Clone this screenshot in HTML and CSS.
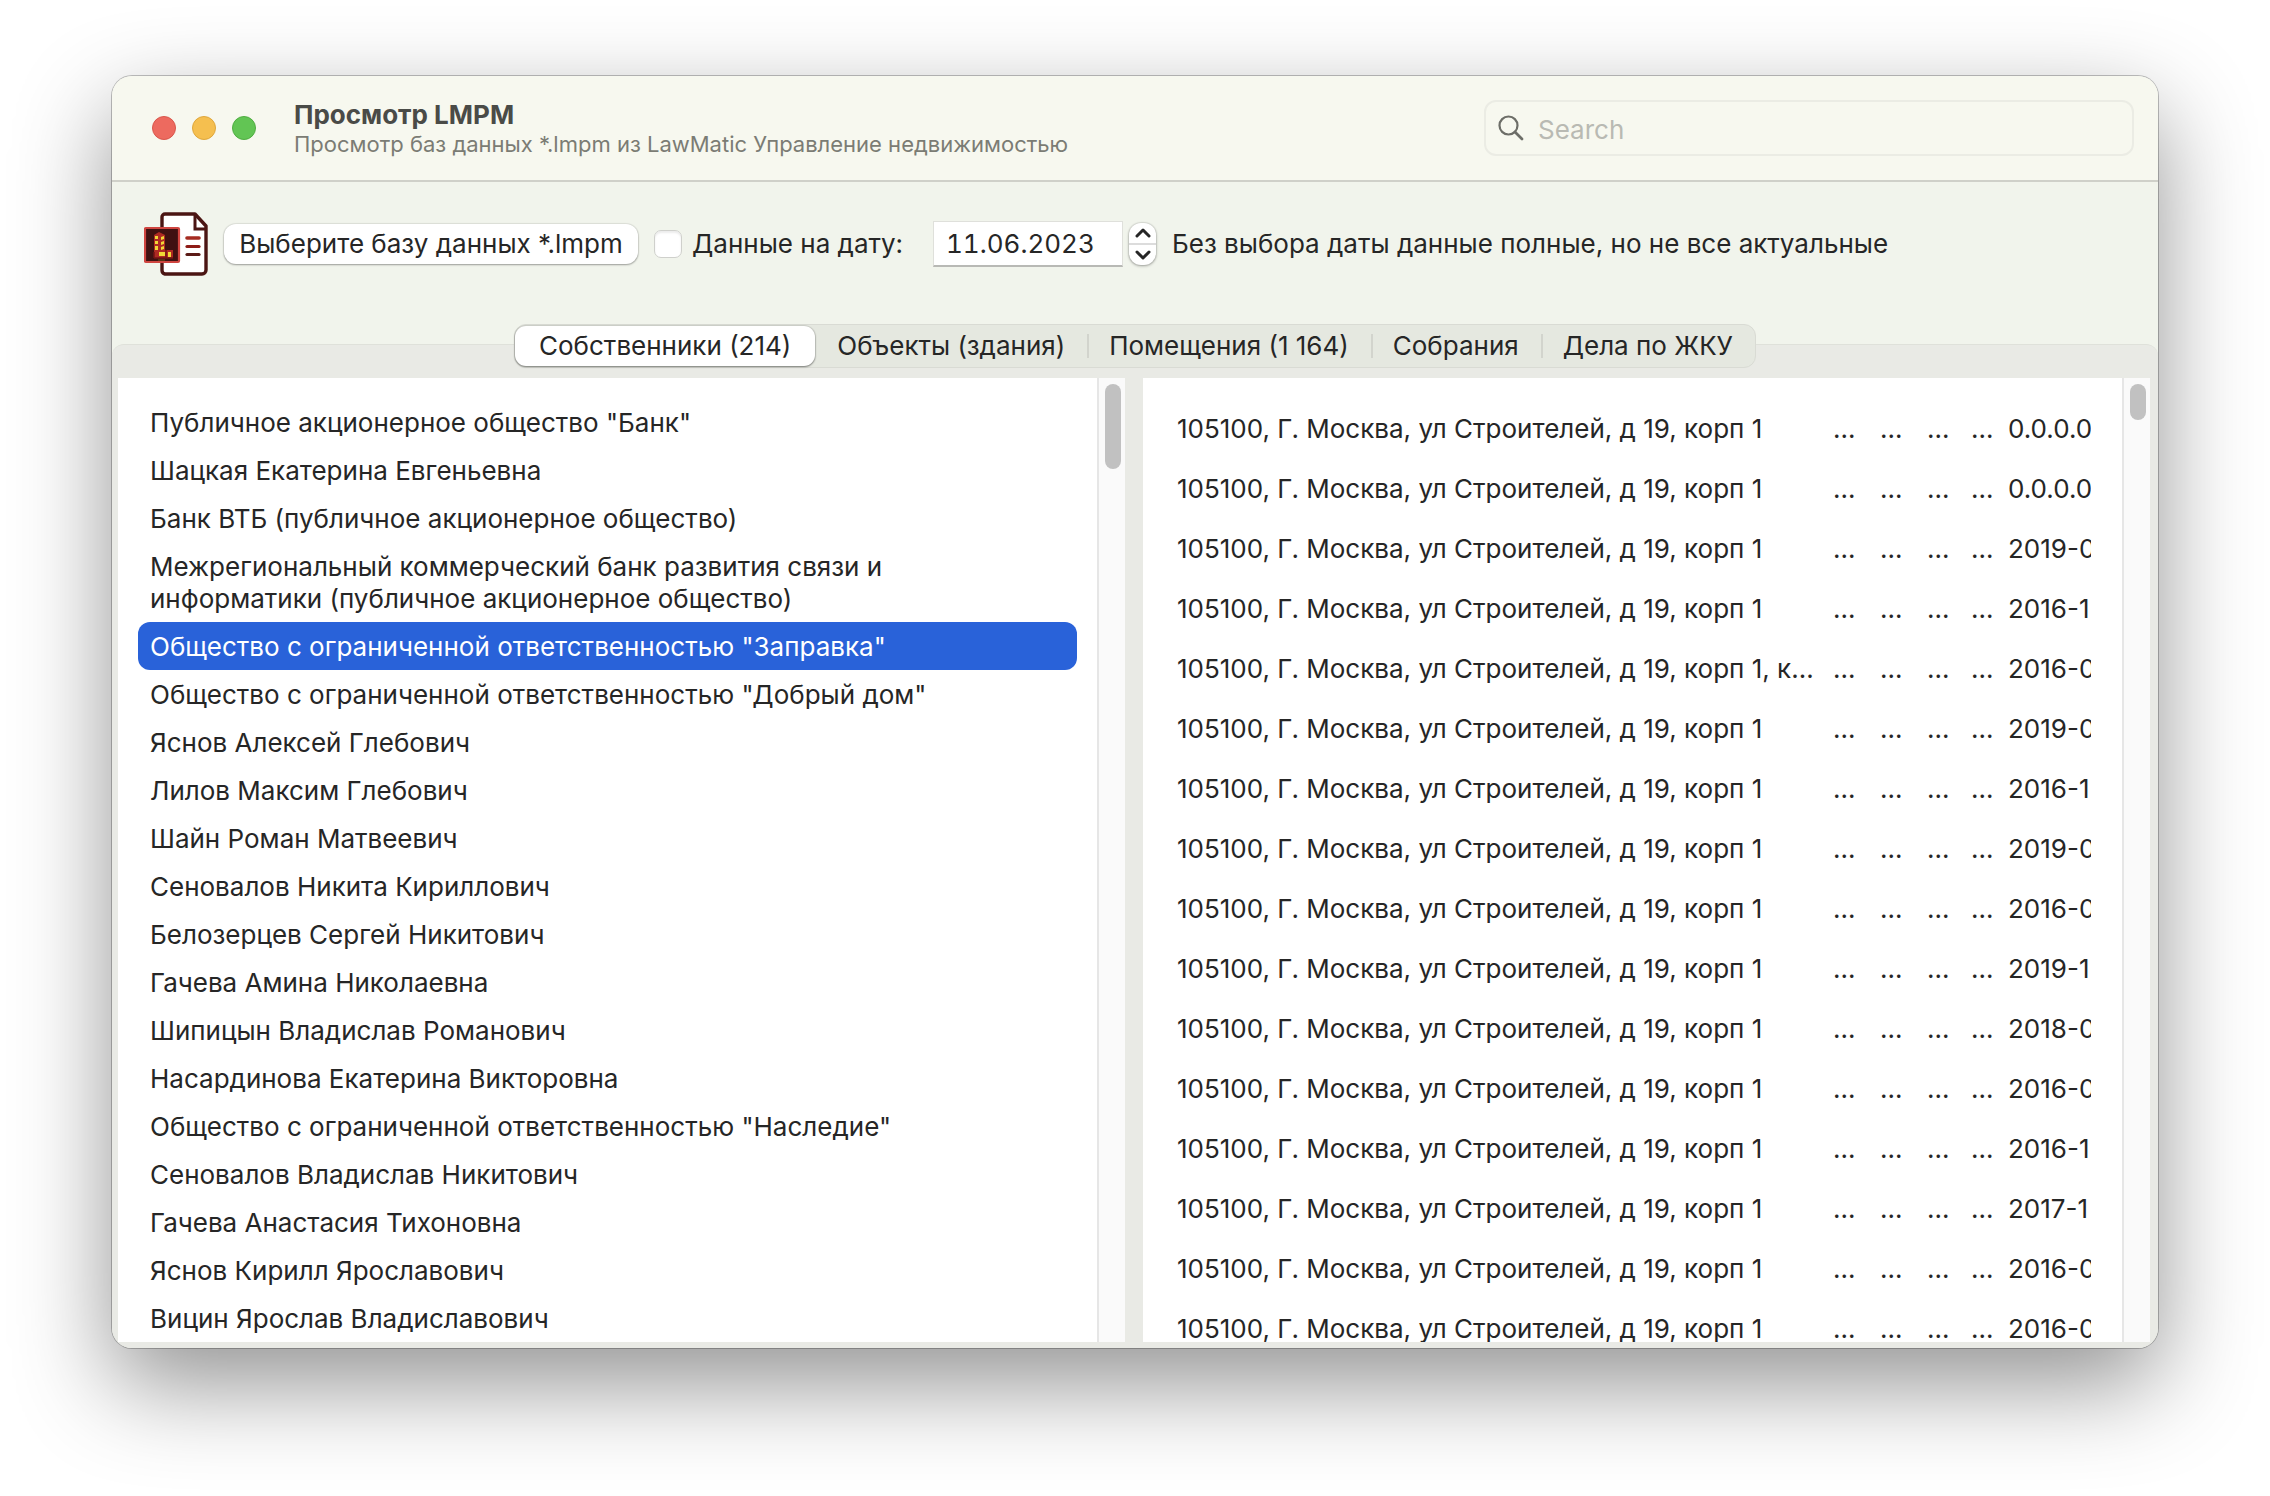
FILE: index.html
```html
<!DOCTYPE html>
<html lang="ru">
<head>
<meta charset="utf-8">
<title>Просмотр LMPM</title>
<link rel="stylesheet" href="styles.css">
</head>
<body>
<main class="window">
  <header class="titlebar">
    <div class="lights">
      <button class="light light-close" aria-label="Закрыть"></button>
      <button class="light light-min" aria-label="Свернуть"></button>
      <button class="light light-max" aria-label="Развернуть"></button>
    </div>
    <div class="titles">
      <h1 class="title">Просмотр LMPM</h1>
      <p class="subtitle">Просмотр баз данных *.lmpm из LawMatic Управление недвижимостью</p>
    </div>
    <label class="search">
      <svg class="search-icon" viewBox="0 0 26 26" aria-hidden="true"><circle cx="10.5" cy="10.5" r="9" fill="none" stroke="currentColor" stroke-width="2.2"/><path d="M17 17l7 7" stroke="currentColor" stroke-width="2.8" stroke-linecap="round"/></svg>
      <input class="search-input" type="text" placeholder="Search" aria-label="Search">
    </label>
  </header>

  <div class="toolbar">
    <svg class="file-icon" viewBox="0 0 64 64" aria-hidden="true">
      <path d="M21 2h30l11 12v44a4 4 0 0 1-4 4H21a4 4 0 0 1-3-4V5a3 3 0 0 1 3-3z" fill="#fff" stroke="#4b1513" stroke-width="3.4" stroke-linejoin="round"/>
      <path d="M51 2v15h11" fill="none" stroke="#4b1513" stroke-width="3"/>
      <path d="M43 26h12" stroke="#a52b20" stroke-width="3.6" stroke-linecap="round"/>
      <path d="M43 34.500h12" stroke="#8e1c17" stroke-width="3.200" stroke-linecap="round"/>
      <path d="M43 42.500h12" stroke="#5b1b17" stroke-width="3.200" stroke-linecap="round"/>
      <rect x="1" y="16" width="34" height="34" rx="1" fill="#3f1111" stroke="#cf4540" stroke-width="2.200"/>
      <path d="M10 23l5-3 6 3v15h8v8H10z" fill="#ae2a23"/>
      <path d="M11 24h3v3h-3zM11 29h3v3h-3zM11 34h3v4h-3zM17 25l3-1v3l-3 1zM17 30l3-1v3l-3 1zM17 35l3-1v3l-3 1zM15 40h6v4h-6zM24 40h3v5h-3z" fill="#f0d836"/>
      <path d="M10 40v6M22 38v8M10 46h19" stroke="#741514" stroke-width="1.500"/>
      <path d="M14 48h7" stroke="#725210"/>
    </svg>
    <button class="open-button">Выберите базу данных *.lmpm</button>
    <label class="date-check"><input class="checkbox" type="checkbox">Данные на дату:</label>
    <input class="date-input" type="text" value="11.06.2023" aria-label="Дата">
    <div class="stepper">
      <button class="step" aria-label="Больше"><svg class="chevron" viewBox="0 0 16 10"><path d="M2 8l6-6 6 6"/></svg></button>
      <button class="step" aria-label="Меньше"><svg class="chevron" viewBox="0 0 16 10"><path d="M2 2l6 6 6-6"/></svg></button>
    </div>
    <span class="hint">Без выбора даты данные полные, но не все актуальные</span>
  </div>

  <nav class="tabs" role="tablist">
    <button class="tab tab-active" role="tab" aria-selected="true">Собственники (214)</button>
    <button class="tab" role="tab">Объекты (здания)</button>
    <button class="tab tab-divided" role="tab">Помещения (1 164)</button>
    <button class="tab tab-divided" role="tab">Собрания</button>
    <button class="tab tab-divided" role="tab">Дела по ЖКУ</button>
  </nav>

  <section class="panel">
    <div class="pane">
      <ul class="owners">
        <li class="owner">Публичное акционерное общество "Банк"</li>
        <li class="owner">Шацкая Екатерина Евгеньевна</li>
        <li class="owner">Банк ВТБ (публичное акционерное общество)</li>
        <li class="owner">Межрегиональный коммерческий банк развития связи и информатики (публичное акционерное общество)</li>
        <li class="owner owner-selected">Общество с ограниченной ответственностью "Заправка"</li>
        <li class="owner">Общество с ограниченной ответственностью "Добрый дом"</li>
        <li class="owner">Яснов Алексей Глебович</li>
        <li class="owner">Лилов Максим Глебович</li>
        <li class="owner">Шайн Роман Матвеевич</li>
        <li class="owner">Сеновалов Никита Кириллович</li>
        <li class="owner">Белозерцев Сергей Никитович</li>
        <li class="owner">Гачева Амина Николаевна</li>
        <li class="owner">Шипицын Владислав Романович</li>
        <li class="owner">Насардинова Екатерина Викторовна</li>
        <li class="owner">Общество с ограниченной ответственностью "Наследие"</li>
        <li class="owner">Сеновалов Владислав Никитович</li>
        <li class="owner">Гачева Анастасия Тихоновна</li>
        <li class="owner">Яснов Кирилл Ярославович</li>
        <li class="owner">Вицин Ярослав Владиславович</li>
      </ul>
      <div class="scroller"><div class="thumb thumb-owners"></div></div>
    </div>
    <div class="pane">
      <div class="records">
        <table class="table">
          <colgroup><col><col class="col-wide"><col class="col-wide"><col class="col-mid"><col class="col-narrow"><col class="col-date"></colgroup>
          <tbody>
            <tr><td>105100, Г. Москва, ул Строителей, д 19, корп 1</td><td>...</td><td>...</td><td>...</td><td>...</td><td>0.0.0.0</td></tr>
            <tr><td>105100, Г. Москва, ул Строителей, д 19, корп 1</td><td>...</td><td>...</td><td>...</td><td>...</td><td>0.0.0.0</td></tr>
            <tr><td>105100, Г. Москва, ул Строителей, д 19, корп 1</td><td>...</td><td>...</td><td>...</td><td>...</td><td>2019-0</td></tr>
            <tr><td>105100, Г. Москва, ул Строителей, д 19, корп 1</td><td>...</td><td>...</td><td>...</td><td>...</td><td>2016-1</td></tr>
            <tr><td>105100, Г. Москва, ул Строителей, д 19, корп 1, к...</td><td>...</td><td>...</td><td>...</td><td>...</td><td>2016-0</td></tr>
            <tr><td>105100, Г. Москва, ул Строителей, д 19, корп 1</td><td>...</td><td>...</td><td>...</td><td>...</td><td>2019-0</td></tr>
            <tr><td>105100, Г. Москва, ул Строителей, д 19, корп 1</td><td>...</td><td>...</td><td>...</td><td>...</td><td>2016-1</td></tr>
            <tr><td>105100, Г. Москва, ул Строителей, д 19, корп 1</td><td>...</td><td>...</td><td>...</td><td>...</td><td>2019-0</td></tr>
            <tr><td>105100, Г. Москва, ул Строителей, д 19, корп 1</td><td>...</td><td>...</td><td>...</td><td>...</td><td>2016-0</td></tr>
            <tr><td>105100, Г. Москва, ул Строителей, д 19, корп 1</td><td>...</td><td>...</td><td>...</td><td>...</td><td>2019-1</td></tr>
            <tr><td>105100, Г. Москва, ул Строителей, д 19, корп 1</td><td>...</td><td>...</td><td>...</td><td>...</td><td>2018-0</td></tr>
            <tr><td>105100, Г. Москва, ул Строителей, д 19, корп 1</td><td>...</td><td>...</td><td>...</td><td>...</td><td>2016-0</td></tr>
            <tr><td>105100, Г. Москва, ул Строителей, д 19, корп 1</td><td>...</td><td>...</td><td>...</td><td>...</td><td>2016-1</td></tr>
            <tr><td>105100, Г. Москва, ул Строителей, д 19, корп 1</td><td>...</td><td>...</td><td>...</td><td>...</td><td>2017-1</td></tr>
            <tr><td>105100, Г. Москва, ул Строителей, д 19, корп 1</td><td>...</td><td>...</td><td>...</td><td>...</td><td>2016-0</td></tr>
            <tr><td>105100, Г. Москва, ул Строителей, д 19, корп 1</td><td>...</td><td>...</td><td>...</td><td>...</td><td>2016-0</td></tr>
          </tbody>
        </table>
      </div>
      <div class="scroller"><div class="thumb thumb-records"></div></div>
    </div>
  </section>
</main>
</body>
</html>
```
FILE: styles.css
```css
* { box-sizing: border-box; }

body {
  margin: 0;
  padding: 76px 112px 148px;
  background: #fff;
  color: #262626;
  font: 26px/32px Inter, "Liberation Sans", sans-serif;
}

button, input {
  margin: 0;
  padding: 0;
  border: 0;
  background: none;
  color: inherit;
  font: inherit;
}

.window {
  display: flex;
  flex-direction: column;
  height: calc(100vh - 224px);
  overflow: hidden;
  border-radius: 20px;
  background: #f1f4ec;
  box-shadow: 0 0 0 1px rgba(0, 0, 0, 0.24), 0 36px 96px rgba(0, 0, 0, 0.43);
}

/* Title bar */
.titlebar {
  display: flex;
  align-items: center;
  height: 106px;
  flex: none;
  padding: 0 24px 0 40px;
  border-bottom: 2px solid #cfd0c9;
  background: #f7f8ef;
}
.lights { display: flex; gap: 16px; }
.light { width: 24px; height: 24px; border: 1px solid; border-radius: 50%; }
.light-close { background: #ed6a5f; border-color: #d9574c; }
.light-min { background: #f5bf4f; border-color: #dfa73c; }
.light-max { background: #62c554; border-color: #50ad42; }
.titles { flex: 1; margin-left: 38px; }
.title { margin: 0; font-size: 26px; line-height: 32px; font-weight: 700; color: #4a4b47; }
.subtitle { margin: 0; font-size: 22px; line-height: 26px; color: #7b7c74; }
.search {
  display: flex;
  align-items: center;
  gap: 14px;
  width: 650px;
  height: 56px;
  padding: 0 12px;
  border: 2px solid #ebece4;
  border-radius: 12px;
}
.search-icon { width: 26px; height: 26px; color: #6d6e68; }
.search-input { flex: 1; min-width: 0; padding-top: 4px; outline: 0; }
.search-input::placeholder { color: #b9bab3; opacity: 1; }

/* Toolbar */
.toolbar {
  display: flex;
  align-items: center;
  flex: none;
  height: 142px;
  padding: 0 32px 18px;
}
.file-icon { width: 64px; height: 64px; margin-right: 16px; }
.open-button {
  width: 414px;
  height: 40px;
  border-radius: 12px;
  background: #fff;
  box-shadow: 0 0 1px 1px rgba(0, 0, 0, 0.08), 0 1px 2px rgba(0, 0, 0, 0.3);
  line-height: 40px;
  white-space: nowrap;
}
.date-check {
  display: flex;
  align-items: center;
  gap: 10px;
  width: 279px;
  margin-left: 16px;
  white-space: nowrap;
}
.checkbox {
  appearance: none;
  width: 28px;
  height: 28px;
  border: 1px solid #cfd0cc;
  border-radius: 7px;
  background: #fff;
  box-shadow: inset 0 2px 2px rgba(0, 0, 0, 0.08);
}
.date-input {
  width: 190px;
  height: 46px;
  padding: 0 12px;
  border: 1px solid #dfe0db;
  border-bottom: 2px solid #b8b9b5;
  background: #fff;
  font-variant-numeric: tabular-nums;
}
.stepper {
  display: flex;
  flex-direction: column;
  width: 27px;
  height: 42px;
  margin: 0 16px 0 6px;
  overflow: hidden;
  border-radius: 12px;
  background: #fff;
  box-shadow: 0 0 1px 1px rgba(0, 0, 0, 0.08), 0 1px 3px rgba(0, 0, 0, 0.3);
}
.step { display: flex; flex: 1; align-items: center; justify-content: center; }
.step + .step { border-top: 2px solid #dcdcdc; }
.chevron { width: 16px; height: 10px; fill: none; stroke: #262626; stroke-width: 3; stroke-linecap: round; stroke-linejoin: round; }
.hint { white-space: nowrap; }

/* Tabs straddle the top edge of the panel */
.tabs {
  position: relative;
  z-index: 1;
  display: flex;
  flex: none;
  align-self: center;
  height: 44px;
  margin-bottom: -24px;
  border: 1px solid #d9dbd4;
  border-radius: 12px;
  background: #e5e8e0;
}
.tab { position: relative; padding: 0 22px; white-space: nowrap; line-height: 40px; }
.tab-active {
  height: 40px;
  margin-top: 1px;
  padding: 0 24px;
  border-radius: 11px;
  background: #fff;
  box-shadow: 0 0 1px 1px rgba(0, 0, 0, 0.1), 0 1px 2px rgba(0, 0, 0, 0.4);
}
.tab-divided::before {
  content: "";
  position: absolute;
  left: 0;
  top: 9px;
  width: 2px;
  height: 24px;
  background: #d2d4cd;
}

/* Lists */
.panel {
  display: flex;
  flex: 1;
  gap: 18px;
  min-height: 0;
  padding: 33px 8px 6px 6px;
  border-top: 1px solid #dfe1da;
  border-radius: 12px 12px 0 0;
  background: #e9eae5;
}
.pane { display: flex; flex: 1; min-width: 0; background: #fff; }
.owners { flex: 1; margin: 0; padding: 20px; overflow: hidden; list-style: none; }
.owner { padding: 9px 100px 7px 12px; }
.owner-selected { border-radius: 12px; background: #2962d9; color: #fff; }
.records { flex: 1; min-width: 0; padding: 21px 31px 0 34px; overflow: hidden; }
.table { width: 100%; table-layout: fixed; border-collapse: collapse; }
.table td { height: 60px; padding: 0; overflow: hidden; white-space: nowrap; }
.col-wide { width: 47px; }
.col-mid { width: 44px; }
.col-narrow { width: 37px; }
.col-date { width: 83px; }
.scroller { flex: none; width: 28px; padding: 6px 4px 0 6px; border-left: 2px solid #e6e6e6; background: #fafafa; }
.thumb { border-radius: 8px; background: #c1c1c1; }
.thumb-owners { height: 85px; }
.thumb-records { height: 36px; }
```
